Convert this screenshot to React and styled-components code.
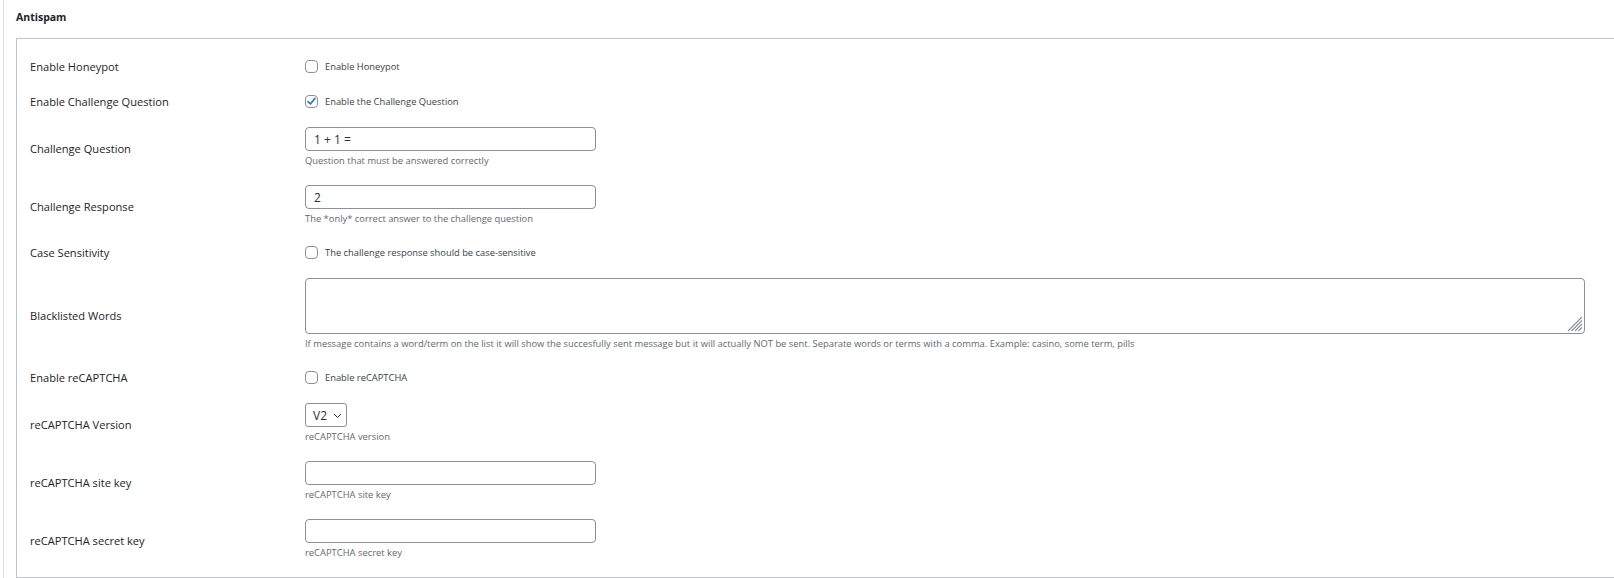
import React from "react";
import styled, { createGlobalStyle } from "styled-components";

const Global = createGlobalStyle`
  html, body { margin: 0; padding: 0; background: #fff; overflow: hidden; }
  body { font-family: "Open Sans", "Noto Sans", Arial, sans-serif; color: #1d2327; }
`;

const Page = styled.div`
  margin-left: 3px;
  border-left: 1px solid #dcdcde;
  padding: 9px 0 0 12px;
  min-height: 578px;
  box-sizing: border-box;
  margin-right: -10px;
`;

const Title = styled.h2`
  margin: 0 0 13px;
  font-size: 10.5px;
  line-height: 16px;
  font-weight: 700;
  color: #1d2327;
`;

const Panel = styled.div`
  border: 1px solid #c3c4c7;
  padding: 9px 0 9px 13px;
  display: flex;
  flex-direction: column;
`;

const Row = styled.div`
  display: grid;
  grid-template-columns: 275px 1fr;
  align-items: center;
  padding: 9px 0;
`;

const Label = styled.div`
  padding-top: 2px;
  font-size: 11.1px;
  line-height: 15px;
  color: #1d2327;
`;

const Field = styled.div`
  display: flex;
  flex-direction: column;
  align-items: flex-start;
  padding-right: 38px;
`;

const CheckLine = styled.label`
  display: flex;
  align-items: center;
  gap: 7px;
  height: 13px;
  padding: 3px 0 1px;
  font-size: 9.35px;
  line-height: 13px;
  color: #3c434a;
`;

const Box = styled.span`
  width: 13px;
  height: 13px;
  box-sizing: border-box;
  border: 1px solid #8c8f94;
  border-radius: 4px;
  display: inline-flex;
  align-items: center;
  justify-content: center;
  background: #fff;
`;

const Input = styled.div`
  width: 291px;
  height: 24px;
  box-sizing: border-box;
  border: 1px solid #8c8f94;
  border-radius: 4px;
  padding: 0 8px;
  display: flex;
  align-items: center;
  font-size: 12px;
  color: #2c3338;
`;

const TextArea = styled.div`
  position: relative;
  width: 100%;
  height: 56px;
  box-sizing: border-box;
  border: 1px solid #8c8f94;
  border-radius: 4px;
`;

const Grip = styled.svg`
  position: absolute;
  right: 1px;
  bottom: 1px;
`;

const Select = styled.div`
  width: 42px;
  height: 24px;
  box-sizing: border-box;
  border: 1px solid #8c8f94;
  border-radius: 3px;
  padding: 0 4px 0 7px;
  display: flex;
  align-items: center;
  justify-content: space-between;
  font-size: 12px;
  color: #2c3338;
`;

const Help = styled.div`
  margin-top: 3px;
  font-size: 9.4px;
  line-height: 13px;
  color: #646970;
  white-space: nowrap;
`;

const Check = ({ checked, children }) => (
  <CheckLine>
    <Box>
      {checked && (
        <svg width="11" height="11" viewBox="0 0 11 11">
          <path d="M2 5.6 L4.4 8 L9 2.4" fill="none" stroke="#2f7bc4" strokeWidth="1.7" strokeLinecap="round" strokeLinejoin="round" />
        </svg>
      )}
    </Box>
    {children}
  </CheckLine>
);

const TextField = ({ value, help }) => (
  <Field>
    <Input>{value}</Input>
    <Help>{help}</Help>
  </Field>
);

export default function App() {
  return (
    <>
      <Global />
      <Page>
        <Title>Antispam</Title>
        <Panel>
          <Row>
            <Label>Enable Honeypot</Label>
            <Field><Check>Enable Honeypot</Check></Field>
          </Row>
          <Row>
            <Label>Enable Challenge Question</Label>
            <Field><Check checked>Enable the Challenge Question</Check></Field>
          </Row>
          <Row>
            <Label>Challenge Question</Label>
            <TextField value="1 + 1 =" help="Question that must be answered correctly" />
          </Row>
          <Row>
            <Label>Challenge Response</Label>
            <TextField value="2" help="The *only* correct answer to the challenge question" />
          </Row>
          <Row>
            <Label>Case Sensitivity</Label>
            <Field><Check>The challenge response should be case-sensitive</Check></Field>
          </Row>
          <Row>
            <Label>Blacklisted Words</Label>
            <Field>
              <TextArea>
                <Grip width="16" height="16" viewBox="0 0 16 16">
                  <g stroke="#8c8f94" strokeWidth="1.1">
                    <line x1="15" y1="1" x2="1" y2="15" />
                    <line x1="15" y1="4.5" x2="4.5" y2="15" />
                    <line x1="15" y1="8" x2="8" y2="15" />
                    <line x1="15" y1="11.5" x2="11.5" y2="15" />
                  </g>
                </Grip>
              </TextArea>
              <Help>If message contains a word/term on the list it will show the succesfully sent message but it will actually NOT be sent. Separate words or terms with a comma. Example: casino, some term, pills</Help>
            </Field>
          </Row>
          <Row>
            <Label>Enable reCAPTCHA</Label>
            <Field><Check>Enable reCAPTCHA</Check></Field>
          </Row>
          <Row>
            <Label>reCAPTCHA Version</Label>
            <Field>
              <Select>
                V2
                <svg width="9" height="9" viewBox="0 0 9 9">
                  <path d="M1 3 L4.5 6.5 L8 3" fill="none" stroke="#2c3338" strokeWidth="1" />
                </svg>
              </Select>
              <Help>reCAPTCHA version</Help>
            </Field>
          </Row>
          <Row>
            <Label>reCAPTCHA site key</Label>
            <TextField value="" help="reCAPTCHA site key" />
          </Row>
          <Row>
            <Label>reCAPTCHA secret key</Label>
            <TextField value="" help="reCAPTCHA secret key" />
          </Row>
        </Panel>
      </Page>
    </>
  );
}
